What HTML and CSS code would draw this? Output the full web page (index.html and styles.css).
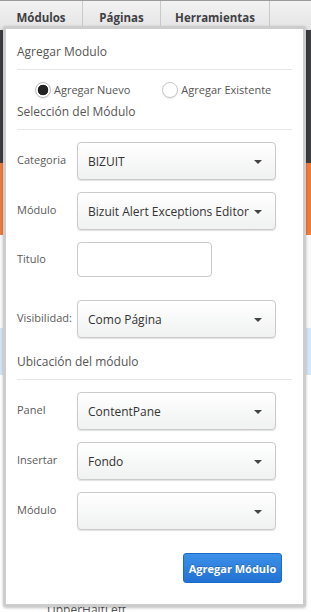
FILE: index.html
```html
<!DOCTYPE html>
<html lang="es">
<head>
<meta charset="utf-8">
<title>Agregar Modulo</title>
<link rel="stylesheet" href="styles.css">
</head>
<body>
<div class="page">
  <nav class="tabs">
    <div class="tab tab-mod">Módulos</div>
    <div class="tab tab-pag">Páginas</div>
    <div class="tab tab-her">Herramientas</div>
    <div class="tab tab-rest"></div>
  </nav>
  <div class="backdrop">
    <div class="band band-dark"></div>
    <div class="band band-orange"></div>
    <div class="band band-white"></div>
    <div class="band band-blue"></div>
    <div class="band band-white2"></div>
    <div class="under-text">UpperHalfLeft</div>
  </div>

  <div class="popup">
    <div class="section-title first">Agregar Modulo</div>
    <div class="rule"></div>
    <div class="radios">
      <label class="radio"><span class="dot checked"></span>Agregar Nuevo</label>
      <label class="radio"><span class="dot"></span>Agregar Existente</label>
    </div>
    <div class="section-title">Selección del Módulo</div>
    <div class="rule"></div>

    <div class="row">
      <span class="lbl">Categoria</span>
      <div class="select"><span>BIZUIT</span><i class="caret"></i></div>
    </div>
    <div class="row">
      <span class="lbl">Módulo</span>
      <div class="select"><span>Bizuit Alert Exceptions Editor</span><i class="caret"></i></div>
    </div>
    <div class="row">
      <span class="lbl">Titulo</span>
      <div class="input"></div>
    </div>
    <div class="row row-vis">
      <span class="lbl">Visibilidad:</span>
      <div class="select"><span>Como Página</span><i class="caret"></i></div>
    </div>

    <div class="section-title sec-ubic">Ubicación del módulo</div>
    <div class="rule"></div>

    <div class="row">
      <span class="lbl">Panel</span>
      <div class="select"><span>ContentPane</span><i class="caret"></i></div>
    </div>
    <div class="row">
      <span class="lbl">Insertar</span>
      <div class="select"><span>Fondo</span><i class="caret"></i></div>
    </div>
    <div class="row">
      <span class="lbl">Módulo</span>
      <div class="select"><span></span><i class="caret"></i></div>
    </div>

    <div class="actions">
      <button class="btn">Agregar Módulo</button>
    </div>
  </div>
</div>
</body>
</html>
```

FILE: styles.css
```css
* { box-sizing: border-box; }
html, body {
  margin: 0;
  padding: 0;
  background: #fff;
  font-family: "Open Sans", "Noto Sans", sans-serif;
  overflow: hidden;
}
.page {
  position: relative;
  width: 311px;
  height: 612px;
  overflow: hidden;
}
.tabs {
  display: flex;
  height: 30px;
  border-top: 1px solid #9a9a9a;
  background: linear-gradient(#f2f2f2, #e4e4e4);
}
.tab {
  display: flex;
  align-items: flex-start;
  justify-content: center;
  padding-top: 9px;
  font-size: 11.5px;
  font-weight: 700;
  color: #3f3f44;
  border-right: 1px solid #c9c9c9;
  white-space: nowrap;
}
.tab-mod { width: 83px; }
.tab-pag { width: 78px; }
.tab-her { width: 109px; }
.tab-rest { flex: 1; border-right: none; }

.backdrop {
  display: flex;
  flex-direction: column;
}
.band-dark { height: 133px; background: #3b3d40; }
.band-orange { height: 72px; background: #ef7b3b; }
.band-white { height: 93px; background: #fafafa; }
.band-blue { height: 47px; background: #d5e6f6; }
.band-white2 { height: 228px; background: #fff; }
.under-text {
  padding-left: 47px;
  font-size: 12px;
  color: #555;
  line-height: 14px;
}

.popup {
  position: absolute;
  left: 3px;
  top: 26px;
  width: 303px;
  height: 581px;
  background: #fff;
  border: 3px solid #cdcdcd;
  border-radius: 3px;
  box-shadow: 0 1px 3px rgba(0,0,0,0.25);
  padding: 13px 11px 20px 11px;
  display: flex;
  flex-direction: column;
}
.section-title {
  font-size: 12px;
  line-height: 20px;
  color: #555;
  margin-top: 4px;
  white-space: nowrap;
}
.section-title.first { margin-top: 0; }
.section-title.sec-ubic { margin-top: 14px; }
.rule {
  height: 1px;
  background: #e6e6e6;
  margin-top: 7px;
}
.radios {
  display: flex;
  height: 16px;
  margin-top: 12px;
  padding-left: 18px;
  font-size: 11px;
  color: #555;
  white-space: nowrap;
}
.radio {
  display: flex;
  align-items: center;
  gap: 3px;
  line-height: 16px;
}
.radio + .radio { margin-left: 32px; }
.dot {
  width: 16px;
  height: 16px;
  border-radius: 50%;
  border: 1px solid #c8c8c8;
  background: #fff;
  box-shadow: 0 1px 1px rgba(0,0,0,0.08);
}
.dot.checked {
  background: radial-gradient(circle, #222 0 5px, #fff 5.6px);
  border-color: #bbb;
}

.row {
  display: flex;
  align-items: center;
  margin-top: 12px;
}
.rule + .row { margin-top: 12px; }
.row-vis { margin-top: 23px; }
.lbl {
  width: 60px;
  font-size: 11px;
  color: #5a5a5a;
  margin-top: -3px;
  white-space: nowrap;
}
.select {
  width: 199px;
  height: 38px;
  border: 1px solid #cacaca;
  border-radius: 4px;
  background: linear-gradient(#fff, #f0f1f1);
  box-shadow: 0 1px 1px rgba(0,0,0,0.12);
  display: flex;
  align-items: center;
  justify-content: space-between;
  padding: 0 13px 0 10px;
  font-size: 12px;
  color: #333;
  white-space: nowrap;
}
.caret {
  width: 0;
  height: 0;
  border-left: 4px solid transparent;
  border-right: 4px solid transparent;
  border-top: 4px solid #444;
  margin-top: 2px;
}
.input {
  width: 135px;
  height: 35px;
  border: 1px solid #cacaca;
  border-radius: 4px;
  background: #fff;
}
.actions {
  display: flex;
  justify-content: flex-end;
  margin-top: 23px;
  padding-right: 10px;
}
.btn {
  height: 30px;
  width: 99px;
  border: 1px solid #1d6bc6;
  border-radius: 3px;
  background: linear-gradient(#3c90e8, #2272d3);
  color: #fff;
  font-family: "Open Sans", "Noto Sans", sans-serif;
  font-size: 11px;
  font-weight: 700;
  padding: 0;
  white-space: nowrap;
  text-shadow: 0 -1px 0 rgba(0,0,0,0.2);
}
```
